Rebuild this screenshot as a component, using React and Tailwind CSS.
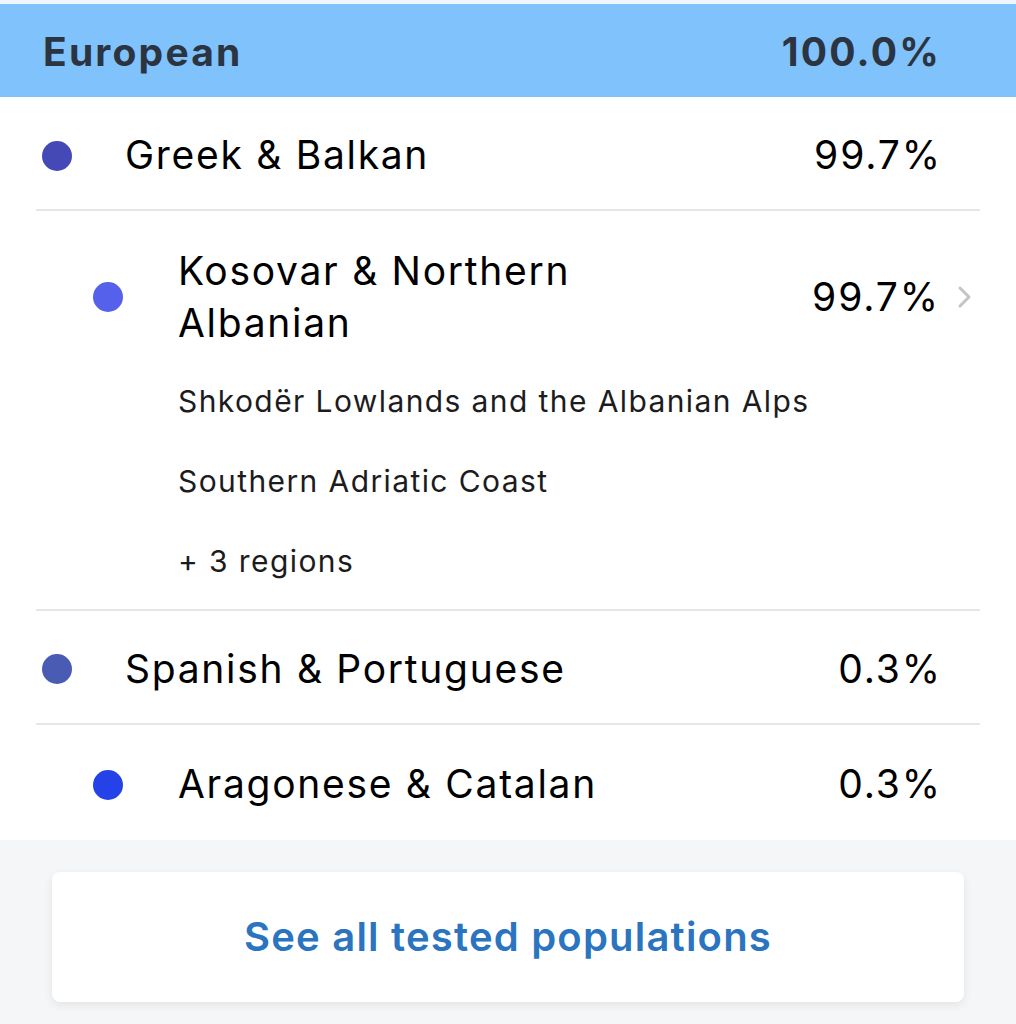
export default function App() {
  const font = { fontFamily: "Inter, 'Noto Sans', sans-serif" };

  return (
    <div className="min-h-screen w-[1016px] bg-[#f5f6f8]" style={font}>
      <div className="h-[4px] bg-[#eef6fd]" />
      <div className="flex h-[93px] items-center justify-between bg-[#80c2fb] pl-[43px] pr-[77px] pt-[4px] text-[#2b3440]">
        <span className="text-[39px] font-bold tracking-[2.2px]">European</span>
        <span className="-mr-[2px] text-[39px] font-bold tracking-[2.2px]">100.0%</span>
      </div>

      <div className="bg-white px-[36px]">
        {/* Greek & Balkan */}
        <div className="flex h-[114px] items-center border-b-2 border-[#e6e6e8] pt-[5px] text-black">
          <span className="ml-[6px] h-[30px] w-[30px] rounded-full bg-[#4549b6]" />
          <span className="ml-[53px] flex-1 text-[39px] tracking-[1.7px]">Greek &amp; Balkan</span>
          <span className="mr-[38px] text-[39px] tracking-[1.9px]">99.7%</span>
        </div>

        {/* Kosovar & Northern Albanian */}
        <div className="border-b-2 border-[#e6e6e8] pb-[8px]">
          <div className="flex items-center pt-[34px] text-black">
            <span className="ml-[57px] h-[30px] w-[30px] shrink-0 rounded-full bg-[#5561ea]" />
            <span className="ml-[55px] flex-1 text-[39px] leading-[52px] tracking-[1.7px]">
              Kosovar &amp; Northern
              <br />
              Albanian
            </span>
            <span className="text-[39px] tracking-[1.9px]">99.7%</span>
            <svg className="ml-[16px] mr-[8px] h-[24px] w-[16px]" viewBox="0 0 16 24" fill="none">
              <path d="M4 3l9 9-9 9" stroke="#c4c4c6" strokeWidth="3" strokeLinecap="round" strokeLinejoin="round" />
            </svg>
          </div>
          <div className="ml-[142px] mt-[12px] flex flex-col text-[30px] tracking-[1.4px] text-[#1c1c1e]">
            <span className="leading-[80px]">Shkodër Lowlands and the Albanian Alps</span>
            <span className="leading-[80px]">Southern Adriatic Coast</span>
            <span className="leading-[80px]">+ 3 regions</span>
          </div>
        </div>

        {/* Spanish & Portuguese */}
        <div className="flex h-[114px] items-center border-b-2 border-[#e6e6e8] pt-[4px] text-black">
          <span className="ml-[6px] h-[30px] w-[30px] rounded-full bg-[#4a5bb4]" />
          <span className="ml-[53px] flex-1 text-[39px] tracking-[1.7px]">Spanish &amp; Portuguese</span>
          <span className="mr-[38px] text-[39px] tracking-[1.9px]">0.3%</span>
        </div>

        {/* Aragonese & Catalan */}
        <div className="flex h-[115px] items-center pt-[4px] text-black">
          <span className="ml-[57px] h-[30px] w-[30px] rounded-full bg-[#2541e8]" />
          <span className="ml-[55px] flex-1 text-[39px] tracking-[1.7px]">Aragonese &amp; Catalan</span>
          <span className="mr-[38px] text-[39px] tracking-[1.9px]">0.3%</span>
        </div>
      </div>

      <div className="px-[52px] pt-[32px] pb-[22px]">
        <button className="flex h-[130px] w-full items-center justify-center rounded-[8px] bg-white text-[40px] font-semibold tracking-[1.2px] text-[#2a74c0] shadow-[0_3px_10px_rgba(0,0,0,0.08)]">
          See all tested populations
        </button>
      </div>
    </div>
  );
}
